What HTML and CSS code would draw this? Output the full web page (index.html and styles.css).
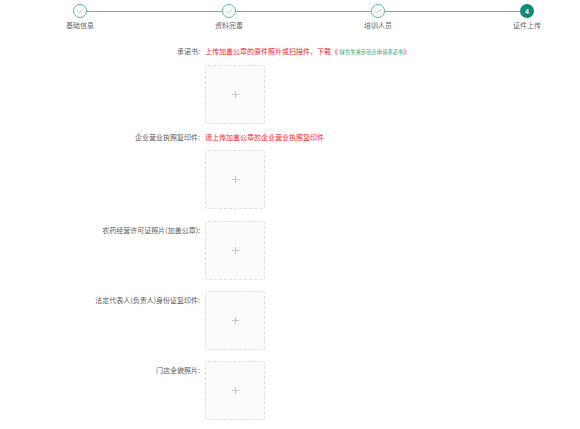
FILE: index.html
```html
<!DOCTYPE html>
<html lang="zh">
<head>
<meta charset="utf-8">
<link rel="stylesheet" href="styles.css">
</head>
<body>
<div class="steps">
  <div class="step done">
    <div class="dot"><svg width="8" height="8" viewBox="0 0 8 8"><path d="M1.3 4.2 L3.2 6 L6.8 2.2" fill="none" stroke="#9ccfc8" stroke-width="0.9"/></svg></div>
    <div class="step-label">基础信息</div>
  </div>
  <div class="line"></div>
  <div class="step done">
    <div class="dot"><svg width="8" height="8" viewBox="0 0 8 8"><path d="M1.3 4.2 L3.2 6 L6.8 2.2" fill="none" stroke="#9ccfc8" stroke-width="0.9"/></svg></div>
    <div class="step-label">资料完善</div>
  </div>
  <div class="line"></div>
  <div class="step done">
    <div class="dot"><svg width="8" height="8" viewBox="0 0 8 8"><path d="M1.3 4.2 L3.2 6 L6.8 2.2" fill="none" stroke="#9ccfc8" stroke-width="0.9"/></svg></div>
    <div class="step-label">培训人员</div>
  </div>
  <div class="line"></div>
  <div class="step current">
    <div class="dot">4</div>
    <div class="step-label">证件上传</div>
  </div>
</div>

<div class="form">
  <div class="row stacked">
    <div class="label">承诺书:</div>
    <div class="content">
      <div class="hint">上传加盖公章的原件照片或扫描件，下载《 <span class="link">绿色生资示范店申请承诺书</span>》</div>
      <div class="upload"><span class="plus"></span></div>
    </div>
  </div>
  <div class="row stacked">
    <div class="label">企业营业执照复印件:</div>
    <div class="content">
      <div class="hint">请上传加盖公章的企业营业执照复印件</div>
      <div class="upload"><span class="plus"></span></div>
    </div>
  </div>
  <div class="row inline">
    <div class="label">农药经营许可证照片(加盖公章):</div>
    <div class="content">
      <div class="upload"><span class="plus"></span></div>
    </div>
  </div>
  <div class="row inline">
    <div class="label">法定代表人(负责人)身份证复印件:</div>
    <div class="content">
      <div class="upload"><span class="plus"></span></div>
    </div>
  </div>
  <div class="row inline">
    <div class="label">门店全貌照片:</div>
    <div class="content">
      <div class="upload"><span class="plus"></span></div>
    </div>
  </div>
</div>
</body>
</html>
```

FILE: styles.css
```css
html, body {
  margin: 0;
  padding: 0;
  background: #ffffff;
  font-family: "Noto Sans CJK SC", "Noto Sans", sans-serif;
}

.steps {
  display: flex;
  align-items: flex-start;
  padding: 4px 0 0 60px;
  height: 42px;
  box-sizing: border-box;
}

.step {
  width: 40px;
  display: flex;
  flex-direction: column;
  align-items: center;
  position: relative;
  z-index: 1;
}

.dot {
  width: 14px;
  height: 14px;
  box-sizing: border-box;
  border-radius: 50%;
  display: flex;
  align-items: center;
  justify-content: center;
}

.step.done .dot {
  border: 1px solid #5cb8ad;
  background: #ffffff;
}

.step.current .dot {
  background: #0f8a79;
  color: #ffffff;
  font-size: 7px;
  font-weight: bold;
  font-family: "Liberation Sans", sans-serif;
}

.step-label {
  margin-top: 2px;
  font-size: 7px;
  line-height: 10px;
  color: #666666;
  white-space: nowrap;
}

.line {
  width: 135px;
  flex: none;
  height: 1px;
  margin: 6.5px -13px 0;
  background: #5cb8ad;
  position: relative;
  z-index: 0;
}

.form {
  padding-top: 4px;
}

.row {
  display: flex;
  margin-bottom: 11px;
}

.row.stacked {
  margin-bottom: 8px;
}

.row.stacked + .row.inline {
  margin-top: 12px;
}

.label {
  width: 200px;
  flex: none;
  text-align: right;
  font-size: 7px;
  line-height: 10px;
  color: #5a5a5a;
  white-space: nowrap;
}

.row.inline .label {
  padding-top: 4px;
}

.content {
  margin-left: 5px;
  display: flex;
  flex-direction: column;
}

.hint {
  font-size: 7px;
  line-height: 10px;
  color: #f0262b;
  white-space: nowrap;
}

.link {
  font-size: 5.3px;
  color: #2a9d5c;
}

.stacked .upload {
  margin-top: 8px;
}

.upload {
  width: 60px;
  height: 59px;
  box-sizing: border-box;
  border: 1px dashed #dcdfe6;
  border-radius: 3px;
  background: #fafbfd;
  display: flex;
  align-items: center;
  justify-content: center;
}

.plus {
  width: 7px;
  height: 7px;
  position: relative;
}

.plus::before,
.plus::after {
  content: "";
  position: absolute;
  background: #c0c4cc;
}

.plus::before {
  left: 0;
  top: 3px;
  width: 7px;
  height: 1px;
}

.plus::after {
  left: 3px;
  top: 0;
  width: 1px;
  height: 7px;
}
```
